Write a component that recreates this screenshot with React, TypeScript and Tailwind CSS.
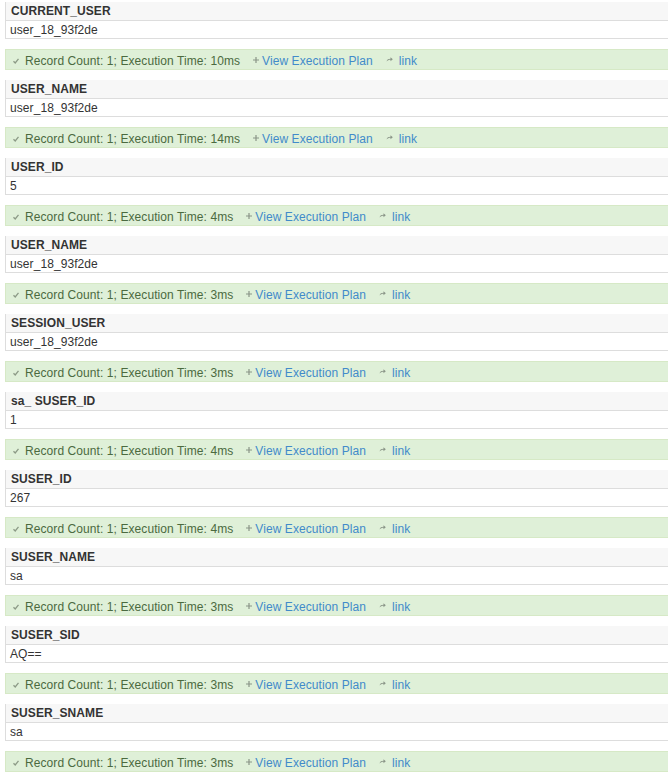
import React from "react";

const blocks = [
  { h: "CURRENT_USER", v: "user_18_93f2de", t: "10ms" },
  { h: "USER_NAME", v: "user_18_93f2de", t: "14ms" },
  { h: "USER_ID", v: "5", t: "4ms" },
  { h: "USER_NAME", v: "user_18_93f2de", t: "3ms" },
  { h: "SESSION_USER", v: "user_18_93f2de", t: "3ms" },
  { h: "sa_ SUSER_ID", v: "1", t: "4ms" },
  { h: "SUSER_ID", v: "267", t: "4ms" },
  { h: "SUSER_NAME", v: "sa", t: "3ms" },
  { h: "SUSER_SID", v: "AQ==", t: "3ms" },
  { h: "SUSER_SNAME", v: "sa", t: "3ms" },
];

const Check = () => (
  <svg width="6" height="6" viewBox="0 0 6 6" className="shrink-0">
    <path d="M0.5 3.2 L2.2 5 L5.5 0.8" stroke="#8c9a86" strokeWidth="1.3" fill="none" />
  </svg>
);

const Plus = () => (
  <svg width="6" height="6" viewBox="0 0 6 6" className="shrink-0 mb-[3px]">
    <path d="M3 0 V6 M0 3 H6" stroke="#8a9587" strokeWidth="1.2" fill="none" />
  </svg>
);

const Share = () => (
  <svg width="7" height="5" viewBox="0 0 7 5" className="shrink-0 mb-[4px]">
    <path d="M0.5 4.5 C1 2.5 2.5 1.8 4.5 1.8 V0.2 L6.8 2.3 L4.5 4.3 V2.8 C3 2.8 1.5 3.3 0.5 4.5 Z" fill="#8a9587" />
  </svg>
);

export default function App() {
  return (
    <div
      className="w-[668px] h-[778px] overflow-hidden bg-white text-[12px] text-[#333] tracking-[0.08px]"
      style={{ fontFamily: '"Liberation Sans", Arial, sans-serif' }}
    >
      {blocks.map((b, i) => (
        <div key={i} className="pl-[5px] pt-[2px] pb-[8px] mr-[-20px]">
          <div className="border-l border-[#dddddd]">
            <div className="h-[19px] bg-[#f7f7f7] border-b border-[#dddddd] pl-[5px] font-bold leading-[18px]">
              {b.h}
            </div>
            <div className="h-[18px] border-b border-[#dddddd] pl-[4px] pt-[1px] leading-[16px]">
              {b.v}
            </div>
          </div>
          <div className="mt-[10px] h-[21px] border border-[#d6e9c6] bg-[#dff0d8] flex items-center pl-[7px] pt-[3px] leading-[16px] text-[#4b6a3f]">
            <Check />
            <span className="ml-[6px]">Record Count: 1; Execution Time: {b.t}</span>
            <span className="ml-[13px] flex items-center">
              <Plus />
              <span className="ml-[3px] text-[#428bca]">View Execution Plan</span>
            </span>
            <span className="ml-[13px] flex items-center">
              <Share />
              <span className="ml-[6px] text-[#428bca]">link</span>
            </span>
          </div>
        </div>
      ))}
    </div>
  );
}
